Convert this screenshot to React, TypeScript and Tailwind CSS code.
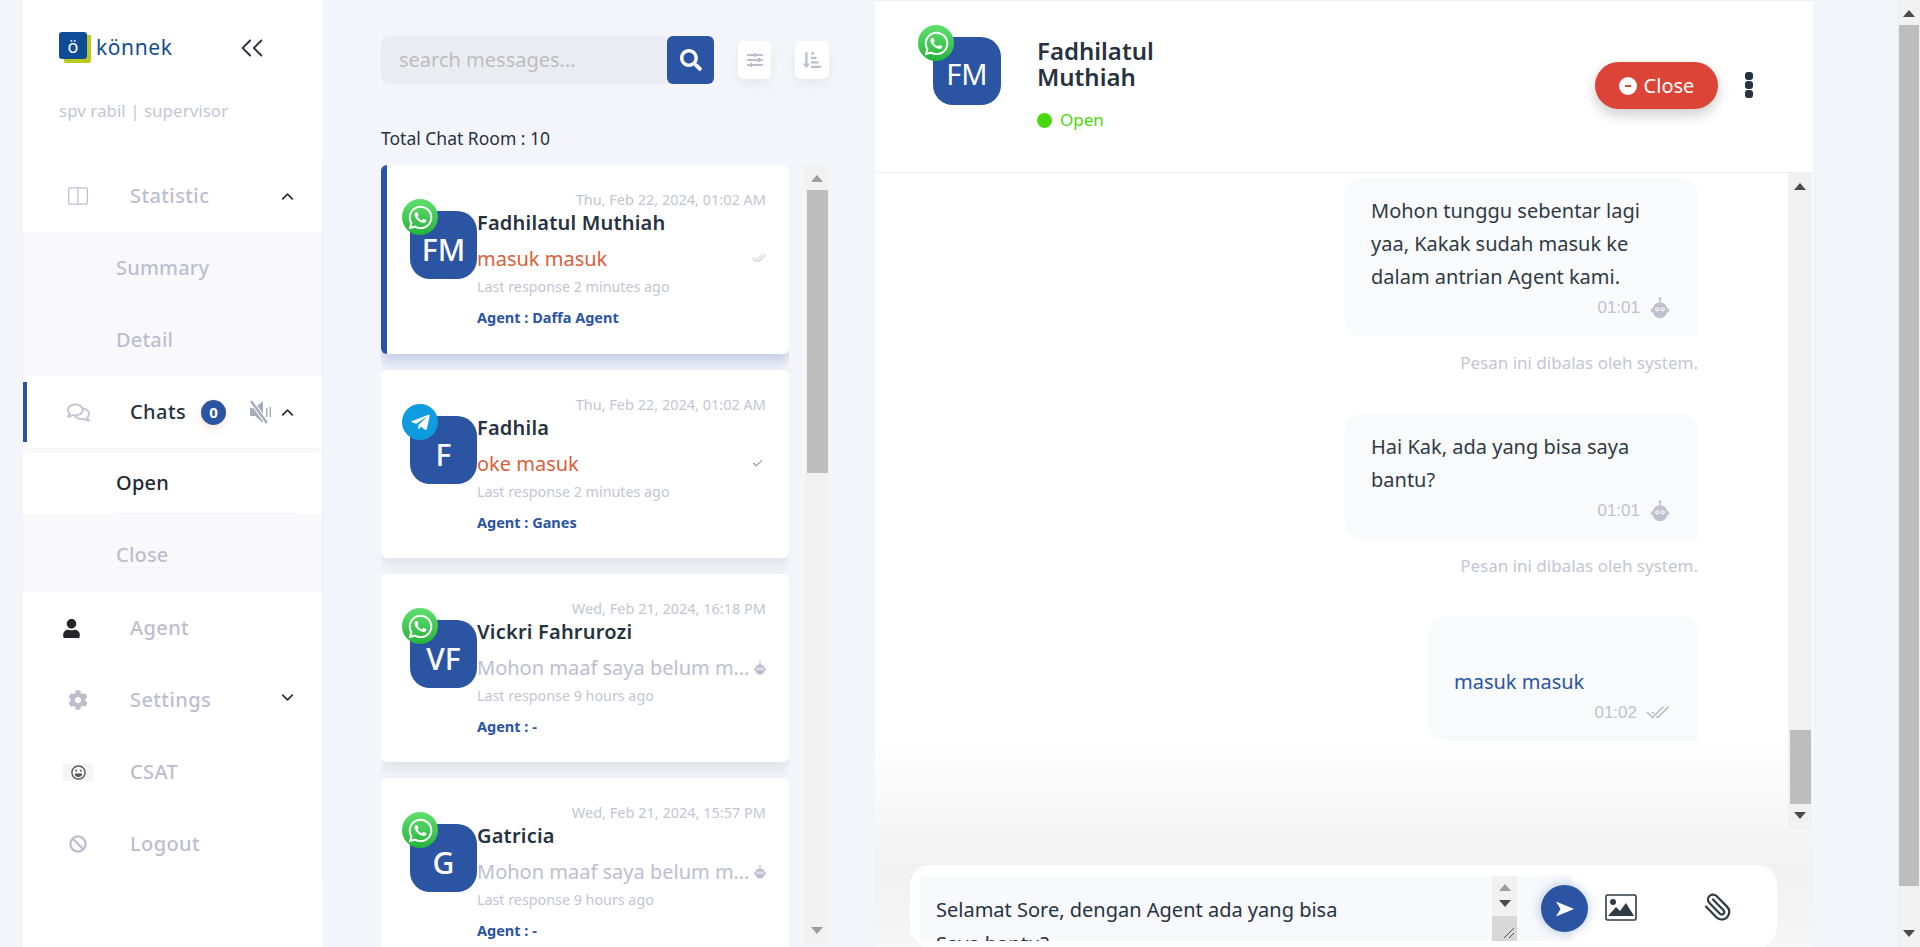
import { ReactNode } from "react";
import { ChevronDown, ChevronUp, Paperclip } from "lucide-react";
import { BsCheck2, BsCheck2All, BsLayoutSplit } from "react-icons/bs";
import {
  FaBan,
  FaCog,
  FaRegComments,
  FaRegLaugh,
  FaSearch,
  FaSlidersH,
  FaSortAmountDownAlt,
  FaTelegramPlane,
  FaUser,
  FaWhatsapp,
} from "react-icons/fa";
import { RxDoubleArrowLeft } from "react-icons/rx";

const BotIcon = ({ className }: { className: string }) => (
  <svg viewBox="0 0 20 24" className={className} fill="currentColor">
    <circle cx="10" cy="1.5" r="1.5" />
    <rect x="9.2" y="2" width="1.6" height="4" />
    <path d="M10 5.5a8 8 0 0 1 8 8v2a8 8 0 0 1-16 0v-2a8 8 0 0 1 8-8z" />
    <rect x="0" y="12" width="2" height="5" rx="1" />
    <rect x="18" y="12" width="2" height="5" rx="1" />
    <circle cx="7" cy="13.5" r="2.4" fill="#f9fafc" />
    <circle cx="13" cy="13.5" r="2.4" fill="#f9fafc" />
    <circle cx="7" cy="13.5" r="1.1" />
    <circle cx="13" cy="13.5" r="1.1" />
  </svg>
);

const MuteIcon = ({ className }: { className: string }) => (
  <svg viewBox="0 0 24 24" className={className} fill="#a9acbd">
    <polygon points="1,8 6,8 14,1 14,23 6,16 1,16" />
    <rect x="17" y="8" width="1.5" height="9" />
    <rect x="20.5" y="7" width="1.5" height="10" />
    <line x1="2" y1="1" x2="18" y2="23" stroke="#ffffff" strokeWidth="4.5" />
    <line x1="2" y1="1" x2="18" y2="23" stroke="#a9acbd" strokeWidth="2.4" />
  </svg>
);

const Arrow = ({ up, color }: { up?: boolean; color: string }) => (
  <svg viewBox="0 0 12 7" className="h-[7px] w-[12px]" fill={color}>
    <polygon points={up ? "6,0 12,7 0,7" : "0,0 12,0 6,7"} />
  </svg>
);

type ScrollbarProps = {
  width: string;
  thumbTop: string;
  thumbHeight: string;
  arrow: string;
};

const Scrollbar = ({ width, thumbTop, thumbHeight, arrow }: ScrollbarProps) => (
  <div className={`relative h-full shrink-0 bg-[#f1f1f1] ${width}`}>
    <div className="absolute left-0 right-0 top-[10px] flex justify-center">
      <Arrow up color={arrow} />
    </div>
    <div className={`absolute left-[2px] right-[1px] bg-[#bdbdbd] ${thumbTop} ${thumbHeight}`} />
    <div className="absolute bottom-[10px] left-0 right-0 flex justify-center">
      <Arrow color={arrow} />
    </div>
  </div>
);

const Logo = () => (
  <div className="flex items-center">
    <div className="relative h-[31px] w-[32px]">
      <div className="absolute bottom-0 right-0 h-[12px] w-[27px] rounded-b-[2px] bg-[#bcc91f]" />
      <div className="absolute right-0 top-[3px] h-[24px] w-[5px] bg-[#bcc91f]" />
      <div className="absolute left-0 top-0 flex h-[27px] w-[28px] items-center justify-center rounded-[3px] bg-[#0f4c97] text-[18px] leading-none text-white">
        ö
      </div>
    </div>
    <span className="ml-[5px] text-[21px] tracking-[0.6px] text-[#134e8e]">könnek</span>
  </div>
);

type NavRowProps = {
  icon: ReactNode;
  label: string;
  dark?: boolean;
  trailing?: ReactNode;
  activeBar?: boolean;
};

const NavRow = ({ icon, label, dark, trailing, activeBar }: NavRowProps) => (
  <div className="relative flex h-[72px] items-center">
    {activeBar && <div className="absolute bottom-[6px] left-0 top-[6px] w-[4px] bg-[#2b54a3]" />}
    <div className="flex w-[107px] justify-center pl-[3px]">{icon}</div>
    <span className={`text-[20px] font-medium tracking-[0.4px] ${dark ? "text-[#27323f]" : "text-[#bcbed0]"}`}>{label}</span>
    {trailing}
  </div>
);

const SubRow = ({ label }: { label: string }) => (
  <div className="h-[72px] pl-[93px] pr-[25px]">
    <div className="flex h-[66px] items-center border-b border-[#f3f3f6] pt-[7px]">
      <span className="border-b border-[#f3f3f6] text-[20px] font-medium leading-[24px] tracking-[0.2px] text-[#bcbed0]">{label}</span>
    </div>
  </div>
);

const Sidebar = () => (
  <aside className="ml-[23px] h-full w-[300px] shrink-0 bg-white">
    <div className="flex h-[160px] flex-col pl-[36px]">
      <div className="flex items-center pt-[32px]">
        <Logo />
        <RxDoubleArrowLeft className="ml-[65px] text-[28px] text-[#27323f]" />
      </div>
      <div className="mt-[35px] text-[17px] leading-[24px] text-[#c4c5d3]">spv rabil | supervisor</div>
    </div>
    <nav className="h-[720px] border-r border-[#f0f0f4]">
      <NavRow
        icon={<BsLayoutSplit className="text-[20px] text-[#bcbed0]" />}
        label="Statistic"
        trailing={<ChevronUp className="absolute left-[255px] text-[#27323f]" size={19} strokeWidth={2.2} />}
      />
      <div className="h-[144px] bg-[#f9f9fb]">
        <SubRow label="Summary" />
        <SubRow label="Detail" />
      </div>
      <NavRow
        icon={<FaRegComments className="text-[23px] text-[#c4c5d3]" />}
        label="Chats"
        dark
        activeBar
        trailing={
          <>
            <span className="absolute left-[178px] flex h-[25px] w-[25px] items-center justify-center rounded-full bg-[#2b54a3] text-[15px] font-bold text-white shadow-[0_4px_8px_rgba(230,120,80,0.2)]">
              0
            </span>
            <MuteIcon className="absolute left-[226px] h-[24px] w-[24px]" />
            <ChevronUp className="absolute left-[255px] text-[#27323f]" size={19} strokeWidth={2.2} />
          </>
        }
      />
      <div className="h-[144px] bg-[#f9f9fb] pt-[5px]">
        <div className="h-[61px] bg-white pl-[93px] pr-[25px]">
          <div className="flex h-[61px] items-center border-b border-[#f3f3f6]">
            <span className="text-[20px] font-medium leading-[24px] tracking-[0.2px] text-[#1f2933]">Open</span>
          </div>
        </div>
        <div className="h-[78px] pl-[93px] pr-[25px] pt-[5px]">
          <div className="flex h-[66px] items-center border-b border-[#f3f3f6] pt-[7px]">
            <span className="border-b border-[#f3f3f6] text-[20px] font-medium leading-[24px] tracking-[0.2px] text-[#bcbed0]">Close</span>
          </div>
        </div>
      </div>
      <NavRow icon={<FaUser className="mr-[13px] text-[19px] text-[#22262b]" />} label="Agent" />
      <NavRow
        icon={<FaCog className="text-[20px] text-[#bcbed0]" />}
        label="Settings"
        trailing={<ChevronDown className="absolute left-[255px] top-[24px] text-[#27323f]" size={19} strokeWidth={2.2} />}
      />
      <NavRow
        icon={
          <span className="flex h-[17px] w-[30px] items-center justify-center bg-[#f4f4f4]">
            <FaRegLaugh className="text-[15px] text-[#555]" />
          </span>
        }
        label="CSAT"
      />
      <NavRow icon={<FaBan className="text-[18px] text-[#bcbed0]" />} label="Logout" />
    </nav>
  </aside>
);

type Channel = "whatsapp" | "telegram";

const ChannelBadge = ({ channel, className }: { channel: Channel; className: string }) =>
  channel === "whatsapp" ? (
    <div
      className={`absolute flex h-[36px] w-[36px] items-center justify-center rounded-full bg-gradient-to-b from-[#5fe06f] to-[#23b33a] text-[27px] text-white ${className}`}
    >
      <FaWhatsapp />
    </div>
  ) : (
    <div
      className={`absolute flex h-[36px] w-[36px] items-center justify-center rounded-full bg-[#0f9be0] text-[21px] text-white ${className}`}
    >
      <FaTelegramPlane />
    </div>
  );

type Room = {
  initials: string;
  name: string;
  channel: Channel;
  date: string;
  message: string;
  tick: "double" | "single" | "bot";
  last: string;
  agent: string;
  active?: boolean;
};

const rooms: Room[] = [
  {
    initials: "FM",
    name: "Fadhilatul Muthiah",
    channel: "whatsapp",
    date: "Thu, Feb 22, 2024, 01:02 AM",
    message: "masuk masuk",
    tick: "double",
    last: "Last response 2 minutes ago",
    agent: "Agent : Daffa Agent",
    active: true,
  },
  {
    initials: "F",
    name: "Fadhila",
    channel: "telegram",
    date: "Thu, Feb 22, 2024, 01:02 AM",
    message: "oke masuk",
    tick: "single",
    last: "Last response 2 minutes ago",
    agent: "Agent : Ganes",
  },
  {
    initials: "VF",
    name: "Vickri Fahrurozi",
    channel: "whatsapp",
    date: "Wed, Feb 21, 2024, 16:18 PM",
    message: "Mohon maaf saya belum membalas pesan",
    tick: "bot",
    last: "Last response 9 hours ago",
    agent: "Agent : -",
  },
  {
    initials: "G",
    name: "Gatricia",
    channel: "whatsapp",
    date: "Wed, Feb 21, 2024, 15:57 PM",
    message: "Mohon maaf saya belum membalas pesan",
    tick: "bot",
    last: "Last response 9 hours ago",
    agent: "Agent : -",
  },
];

const RoomCard = ({ room }: { room: Room }) => (
  <div
    className={`flex shrink-0 rounded-[6px] bg-white pr-[23px] ${
      room.active
        ? "h-[189px] border-l-[6px] border-[#2b54a3] pl-[23px] shadow-[0_8px_14px_rgba(43,84,163,0.25)]"
        : "h-[188px] pl-[29px] shadow-[0_8px_14px_rgba(0,0,0,0.08)]"
    }`}
  >
    <div className="relative mt-[46px] h-[68px] w-[67px] shrink-0">
      <div className="flex h-[68px] w-[67px] items-center justify-center rounded-[20px] bg-[#2b54a3] pt-[8px] text-[30px] font-medium text-white">
        {room.initials}
      </div>
      <ChannelBadge channel={room.channel} className="-left-[8px] -top-[12px]" />
    </div>
    <div className="min-w-0 flex-1 pt-[24px]">
      <div className="text-right text-[14.5px] leading-[20px] text-[#c4c5d3]">{room.date}</div>
      <div className="mt-[2px] text-[20px] font-semibold leading-[24px] tracking-[0.2px] text-[#27323f]">{room.name}</div>
      <div className="mt-[10px] flex h-[27px] items-center">
        <span className={`min-w-0 flex-1 truncate text-[20px] leading-[27px] ${room.tick === "bot" ? "text-[#bcbed0]" : "text-[#d9603a]"}`}>
          {room.message}
        </span>
        {room.tick === "double" && <BsCheck2All className="ml-1 text-[15px] text-[#c4c5d3]" />}
        {room.tick === "single" && <BsCheck2 className="mr-[2px] text-[13px] text-[#7a7f8a]" />}
        {room.tick === "bot" && <BotIcon className="ml-[2px] h-[14px] w-[12px] text-[#bcbed0]" />}
      </div>
      <div className="mt-[5px] text-[14.3px] leading-[20px] text-[#c4c5d3]">{room.last}</div>
      <div className="mt-[11px] text-[14.5px] font-bold leading-[18px] text-[#2b54a3]">{room.agent}</div>
    </div>
  </div>
);

const RoomList = () => (
  <section className="ml-[58px] flex h-full w-[448px] shrink-0 flex-col">
    <div className="flex items-center pt-[36px]">
      <div className="flex h-[48px] w-[286px] items-center rounded-l-[8px] bg-[#ebecf1] pl-[18px] text-[20px] text-[#bdbdbd]">
        search messages...
      </div>
      <button className="flex h-[48px] w-[47px] items-center justify-center rounded-[6px] bg-[#2b54a3] text-[22px] text-white">
        <FaSearch />
      </button>
      <button className="ml-[24px] flex h-[38px] w-[33px] items-center justify-center rounded-[6px] bg-white text-[16px] text-[#bcbed0] shadow-[0_6px_12px_rgba(0,0,0,0.05)]">
        <FaSlidersH />
      </button>
      <button className="ml-[24px] flex h-[38px] w-[34px] items-center justify-center rounded-[6px] bg-white text-[18px] text-[#bcbed0] shadow-[0_6px_12px_rgba(0,0,0,0.05)]">
        <FaSortAmountDownAlt />
      </button>
    </div>
    <div className="mt-[42px] text-[17.5px] leading-[24px] text-[#27323f]">Total Chat Room : 10</div>
    <div className="mt-[15px] flex min-h-0 flex-1">
      <div className="flex w-[408px] flex-col gap-[16px] overflow-hidden">
        {rooms.map((room) => (
          <RoomCard key={room.name} room={room} />
        ))}
      </div>
      <div className="ml-[16px] h-[779px]">
        <Scrollbar width="w-[24px]" thumbTop="top-[25px]" thumbHeight="h-[283px]" arrow="#9d9d9d" />
      </div>
    </div>
  </section>
);

type BubbleProps = {
  time: string;
  width: string;
  status: "bot" | "read";
  own?: boolean;
  children: ReactNode;
};

const Bubble = ({ time, width, status, own, children }: BubbleProps) => (
  <div className={`rounded-l-[16px] rounded-tr-[16px] bg-[#f9fafc] pl-[26px] pr-[29px] pb-[13px] pt-[16px] ${width}`}>
    <div className={`whitespace-nowrap text-[20px] leading-[33px] ${own ? "text-[#2b54a3]" : "text-[#2f3a45]"}`}>{children}</div>
    <div className="flex h-[30px] items-center justify-end">
      <span className="font-['Liberation_Sans'] text-[17px] text-[#c0c1ce]">{time}</span>
      {status === "bot" ? (
        <BotIcon className="ml-[11px] h-[22px] w-[18px] text-[#c0c1ce]" />
      ) : (
        <BsCheck2All className="ml-[8px] text-[24px] text-[#b5b6c4]" />
      )}
    </div>
  </div>
);

const SystemNote = () => (
  <div className="mt-[15px] h-[24px] text-[17px] leading-[24px] text-[#c4c5d3]">Pesan ini dibalas oleh system.</div>
);

const ChatPanel = () => (
  <main className="ml-[46px] flex h-full w-[938px] shrink-0 flex-col bg-[linear-gradient(to_bottom,#ffffff_0%,#ffffff_78%,#f1f1f1_92%,#f6f6f6_100%)]">
    <header className="flex h-[173px] shrink-0 border-t border-b border-[#eeeff3] bg-white pl-[58px]">
      <div className="relative mt-[36px] h-[68px] w-[68px] shrink-0">
        <div className="flex h-[68px] w-[68px] items-center justify-center rounded-[20px] bg-[#2b54a3] pt-[6px] text-[29px] text-white">
          FM
        </div>
        <ChannelBadge channel="whatsapp" className="-left-[15px] -top-[12px]" />
      </div>
      <div className="ml-[36px] pt-[37px]">
        <div className="text-[24px] font-semibold leading-[26px] text-[#27323f]">
          Fadhilatul
          <br />
          Muthiah
        </div>
        <div className="mt-[18px] flex items-center">
          <span className="h-[15px] w-[15px] rounded-full bg-[#4cd80f]" />
          <span className="ml-[8px] text-[17px] leading-[24px] text-[#4cd80f]">Open</span>
        </div>
      </div>
      <div className="ml-auto flex items-start pt-[61px]">
        <button className="flex h-[47px] w-[123px] items-center justify-center rounded-full bg-[#dd4438] text-[20px] text-white shadow-[0_6px_14px_rgba(0,0,0,0.2)]">
          <span className="mr-[7px] flex h-[18px] w-[18px] items-center justify-center rounded-full bg-white">
            <span className="h-[2px] w-[6px] bg-[#dd4438]" />
          </span>
          Close
        </button>
        <div className="ml-[27px] mr-[60px] mt-[10px] flex flex-col gap-[1px]">
          <span className="h-[8px] w-[8px] rounded-[3px] bg-[#27323f]" />
          <span className="h-[8px] w-[8px] rounded-[3px] bg-[#27323f]" />
          <span className="h-[8px] w-[8px] rounded-[3px] bg-[#27323f]" />
        </div>
      </div>
    </header>
    <div className="flex h-[692px] shrink-0">
      <div className="flex min-w-0 flex-1 flex-col items-end pr-[90px] pt-[5px]">
        <Bubble time="01:01" width="w-[353px]" status="bot">
          Mohon tunggu sebentar lagi
          <br />
          yaa, Kakak sudah masuk ke
          <br />
          dalam antrian Agent kami.
        </Bubble>
        <SystemNote />
        <div className="h-[39px]" />
        <Bubble time="01:01" width="w-[353px]" status="bot">
          Hai Kak, ada yang bisa saya
          <br />
          bantu?
        </Bubble>
        <SystemNote />
        <div className="h-[38px]" />
        <Bubble time="01:02" width="w-[270px]" status="read" own>
          <br />
          masuk masuk
        </Bubble>
      </div>
      <div className="mr-[1px] h-[656px]">
        <Scrollbar width="w-[24px]" thumbTop="top-[557px]" thumbHeight="h-[74px]" arrow="#4b4b4b" />
      </div>
    </div>
    <div className="ml-[35px] flex h-[82px] w-[867px] shrink-0 rounded-[20px] bg-white pl-[10px] pt-[11px]">
      <div className="flex h-[65px] w-[652px] shrink-0 overflow-hidden bg-[#f7f9fc]">
        <div className="w-[572px] pl-[16px] pt-[17px] text-[20px] leading-[34px] text-[#27323f]">
          Selamat Sore, dengan Agent ada yang bisa
          <br />
          Saya bantu?
        </div>
        <div className="flex h-full w-[25px] flex-col items-center bg-[#f1f1f1] pt-[8px]">
          <Arrow up color="#9d9d9d" />
          <div className="mt-[9px]">
            <Arrow color="#4b4b4b" />
          </div>
          <div className="mt-auto flex h-[25px] w-full items-end justify-end bg-[#d8d8d8]">
            <svg viewBox="0 0 12 12" className="mb-[2px] mr-[2px] h-[12px] w-[12px]" stroke="#555" strokeWidth="1" fill="none">
              <line x1="1" y1="11" x2="11" y2="1" />
              <line x1="6" y1="11" x2="11" y2="6" />
            </svg>
          </div>
        </div>
      </div>
      <button className="-ml-[31px] mt-[9px] flex h-[47px] w-[47px] shrink-0 items-center justify-center rounded-full bg-[#2b54a3] shadow-[0_0_12px_rgba(43,84,163,0.35)]">
        <svg viewBox="0 0 20 20" className="h-[20px] w-[20px]" fill="white">
          <path d="M1 2.5 19 10 1 17.5 5.5 10z" />
        </svg>
      </button>
      <svg viewBox="0 0 32 27" className="ml-[17px] mt-[18px] h-[27px] w-[32px] shrink-0" fill="#2f3a45">
        <rect x="1" y="1" width="30" height="25" rx="1.5" fill="none" stroke="#2f3a45" strokeWidth="1.6" />
        <circle cx="8" cy="8" r="3" />
        <path d="M3 22 11 13l4 4 6-8 8 13z" />
      </svg>
      <Paperclip className="ml-[66px] mt-[16px] shrink-0 -scale-x-100 text-[#2f3a45]" size={30} strokeWidth={1.8} />
    </div>
  </main>
);

export default function App() {
  return (
    <div className="flex h-[947px] w-full overflow-hidden bg-[#f4f5fa] font-['Noto_Sans',sans-serif]">
      <Sidebar />
      <RoomList />
      <ChatPanel />
      <div className="flex-1" />
      <Scrollbar width="w-[23px]" thumbTop="top-[25px]" thumbHeight="h-[861px]" arrow="#4b4b4b" />
    </div>
  );
}
